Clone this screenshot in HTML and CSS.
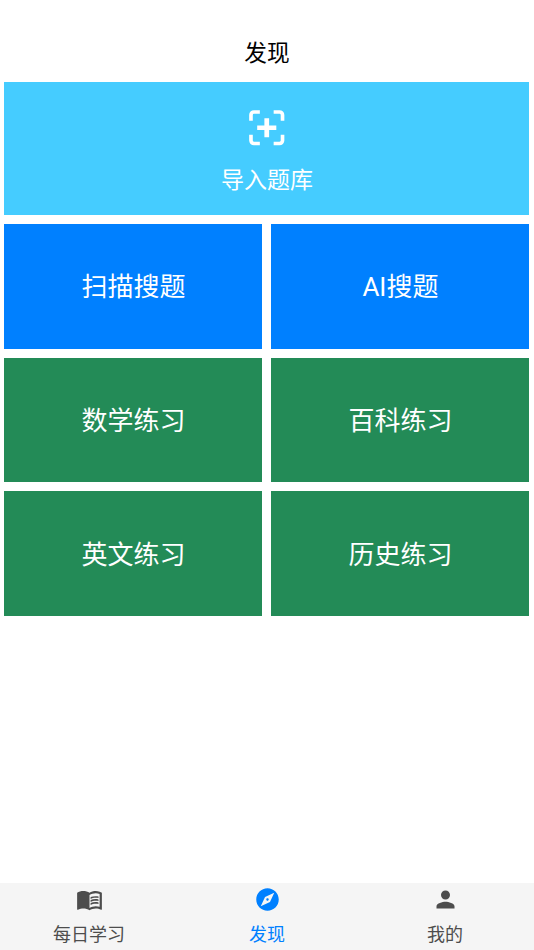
FILE: index.html
```html
<!DOCTYPE html>
<html lang="zh-CN">
<head>
<meta charset="utf-8">
<title>发现</title>
<link rel="stylesheet" href="styles.css">
</head>
<body>
<header class="title">发现</header>
<main class="grid">
<button class="tile import">
<svg class="scan" viewBox="0 0 36 36"><path d="M2 11V5a3 3 0 0 1 3-3h6M25 2h6a3 3 0 0 1 3 3v6M34 25v6a3 3 0 0 1-3 3h-6M11 34H5a3 3 0 0 1-3-3v-6"/><path class="plus" d="M18 8.300v19.400M8.300 18h19.400"/></svg>
<span>导入题库</span>
</button>
<button class="tile blue">扫描搜题</button>
<button class="tile blue">AI搜题</button>
<button class="tile green">数学练习</button>
<button class="tile green">百科练习</button>
<button class="tile green">英文练习</button>
<button class="tile green">历史练习</button>
</main>
<nav class="tabs">
<a class="tab"><svg viewBox="0 0 24 24"><path d="M21 5c-1.11-.35-2.33-.5-3.5-.5-1.95 0-4.05.4-5.5 1.5-1.45-1.1-3.55-1.5-5.5-1.5S2.45 4.9 1 6v14.65c0 .25.25.5.5.5.1 0 .15-.05.25-.05C3.1 20.45 5.05 20 6.5 20c1.95 0 4.05.4 5.5 1.5 1.35-.85 3.8-1.5 5.5-1.5 1.65 0 3.35.3 4.75 1.05.1.05.15.05.25.05.25 0 .5-.25.5-.5V6c-.6-.45-1.25-.75-2-1zm0 13.500c-1.1-.35-2.300-.5-3.500-.5-1.700 0-4.150.650-5.500 1.500V8c1.350-.850 3.800-1.500 5.500-1.500 1.200 0 2.400.150 3.500.500v11.500z"/><path d="M17.500 10.500c.880 0 1.730.090 2.500.260V9.240c-.790-.150-1.640-.240-2.500-.240-1.700 0-3.240.290-4.500.830v1.660c1.130-.640 2.700-.990 4.500-.990zM13 12.490v1.660c1.130-.640 2.700-.990 4.500-.990.880 0 1.730.090 2.500.260V11.900c-.790-.150-1.640-.240-2.500-.240-1.700 0-3.240.300-4.500.830zM17.500 14.330c-1.700 0-3.240.290-4.500.830v1.660c1.130-.640 2.700-.990 4.500-.990.880 0 1.730.090 2.500.260v-1.520c-.790-.160-1.640-.240-2.500-.240z"/></svg><span>每日学习</span></a>
<a class="tab active"><svg viewBox="0 0 24 24"><path d="M12 10.900c-.610 0-1.100.490-1.100 1.100s.490 1.100 1.100 1.100 1.100-.490 1.100-1.100-.490-1.100-1.100-1.100zM12 2C6.480 2 2 6.480 2 12s4.480 10 10 10 10-4.480 10-10S17.520 2 12 2zm2.190 12.190L6 18l3.810-8.190L18 6l-3.810 8.190z"/></svg><span>发现</span></a>
<a class="tab"><svg viewBox="0 0 24 24"><path d="M12 12c2.210 0 4-1.790 4-4s-1.790-4-4-4-4 1.790-4 4 1.790 4 4 4zm0 2c-2.670 0-8 1.340-8 4v2h16v-2c0-2.660-5.330-4-8-4z"/></svg><span>我的</span></a>
</nav>
</body>
</html>
```
FILE: styles.css
```css
* { box-sizing: border-box; }
body {
  margin: 0;
  height: 950px;
  display: flex;
  flex-direction: column;
  background: #fff;
  font-family: Roboto, "Noto Sans CJK SC", sans-serif;
}
.title {
  height: 82px;
  padding-top: 37px;
  line-height: 33px;
  font-size: 22.7px;
  text-align: center;
  color: #000;
}
.grid {
  flex: 1;
  display: grid;
  grid-template-columns: 1fr 1fr;
  grid-template-rows: 133px;
  grid-auto-rows: 124.7px;
  gap: 9px;
  padding: 0 4.6px 0 4.4px;
}
.tile {
  border: 0;
  padding: 0 0 3px;
  color: #fff;
  font: inherit;
  font-size: 26px;
}
.import {
  grid-column: 1 / -1;
  display: flex;
  flex-direction: column;
  align-items: center;
  padding-top: 28px;
  background: #45ccff;
  font-size: 23px;
  line-height: 34px;
}
.scan {
  width: 35.5px;
  height: 35.5px;
  margin-bottom: 18.5px;
  fill: none;
  stroke: #fff;
  stroke-width: 3.7;
}
.plus { stroke-width: 4.8; }
.blue { background: #0080ff; }
.green { background: #238b57; }
.tabs {
  height: 67px;
  display: flex;
  background: #f5f5f5;
}
.tab {
  flex: 1;
  display: flex;
  flex-direction: column;
  align-items: center;
  padding-top: 3.3px;
  font-size: 18px;
  line-height: 26px;
  color: #4d4d4d;
}
.tab svg {
  width: 27px;
  height: 27px;
  margin-bottom: 8.7px;
  fill: currentColor;
}
.tab.active { color: #0080ff; }
```
